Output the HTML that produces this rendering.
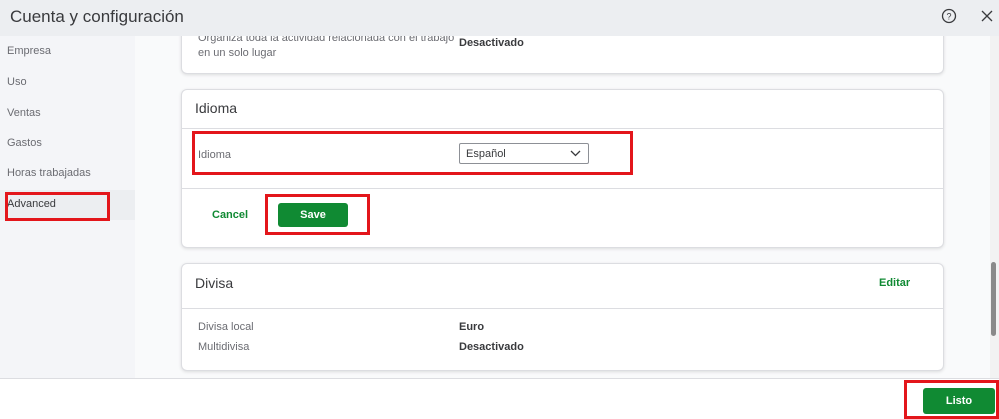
<!DOCTYPE html>
<html><head><style>
*{box-sizing:border-box;margin:0;padding:0}
body{width:999px;height:419px;overflow:hidden;font-family:"Liberation Sans",sans-serif;background:#fff;position:relative}
.a{position:absolute}
.hdr{left:0;top:0;width:999px;height:36px;background:#eceef1;z-index:5}
.side{left:0;top:36px;width:135px;height:342px;background:#f4f5f8}
.main{left:135px;top:36px;width:855px;height:342px;background:#f9fafb}
.nav{left:7px;font-size:11px;color:#6b6c72}
.card{background:#fff;border:1px solid #dcdde1;border-radius:6px;box-shadow:0 1px 3px rgba(0,0,0,.12)}
.red{border:3px solid #e3161b}
.t{font-size:11px;color:#6b6c72}
.b{font-size:11px;color:#393a3d;font-weight:bold}
.btn{background:#108a33;color:#fff;font-weight:bold;font-size:11px;border-radius:3px;text-align:center}
.z{z-index:6}
</style></head><body>
<div class="a side"></div>
<div class="a main"></div>
<div class="a hdr"></div>
<div class="a z" style="left:10px;top:7px;font-size:17px;color:#393a3d">Cuenta y configuración</div>
<svg class="a z" style="left:941px;top:8px" width="16" height="16" viewBox="0 0 16 16"><circle cx="8" cy="8" r="6.5" fill="none" stroke="#393a3d" stroke-width="1.3"/><text x="8" y="11.5" font-size="9" text-anchor="middle" fill="#393a3d" font-family="Liberation Sans">?</text></svg>
<svg class="a z" style="left:981px;top:10px" width="12" height="12" viewBox="0 0 12 12"><path d="M1 1L11 11M11 1L1 11" stroke="#393a3d" stroke-width="1.3"/></svg>
<div class="a" style="left:990px;top:36px;width:9px;height:342px;background:#f2f2f2"></div>
<div class="a" style="left:991px;top:262px;width:5px;height:74px;background:#8a8a8a;border-radius:3px"></div>
<div class="a nav" style="top:45px">Empresa</div>
<div class="a nav" style="top:76px">Uso</div>
<div class="a nav" style="top:107px">Ventas</div>
<div class="a nav" style="top:137px">Gastos</div>
<div class="a nav" style="top:167px">Horas trabajadas</div>
<div class="a" style="left:0;top:190px;width:135px;height:30px;background:#eceef1"></div>
<div class="a nav" style="top:198px;color:#393a3d">Advanced</div>
<div class="a red" style="left:5px;top:192px;width:105px;height:29px"></div>

<div class="a card" style="left:181px;top:20px;width:763px;height:54px;border-top:none;border-radius:0 0 6px 6px"></div>
<div class="a t" style="left:198px;top:31px;width:260px;line-height:15px">Organiza toda la actividad relacionada con el trabajo en un solo lugar</div>
<div class="a b" style="left:459px;top:37px">Desactivado</div>

<div class="a card" style="left:181px;top:89px;width:763px;height:159px"></div>
<div class="a" style="left:195px;top:100px;font-size:14px;color:#393a3d">Idioma</div>
<div class="a" style="left:182px;top:128px;width:761px;height:1px;background:#dcdde1"></div>
<div class="a t" style="left:198px;top:149px">Idioma</div>
<div class="a" style="left:459px;top:143px;width:130px;height:21px;border:1px solid #8d9096;border-radius:2px;font-size:11px;color:#393a3d;padding:4px 6px">Español</div>
<svg class="a" style="left:570px;top:150px" width="11" height="7" viewBox="0 0 11 7"><path d="M1 1L5.5 5.5L10 1" fill="none" stroke="#393a3d" stroke-width="1.3"/></svg>
<div class="a red" style="left:192px;top:131px;width:441px;height:44px"></div>
<div class="a" style="left:182px;top:188px;width:761px;height:1px;background:#dcdde1"></div>
<div class="a" style="left:212px;top:209px;font-size:11px;font-weight:bold;color:#108a33">Cancel</div>
<div class="a btn" style="left:278px;top:203px;width:70px;height:24px;line-height:24px">Save</div>
<div class="a red" style="left:265px;top:194px;width:105px;height:41px"></div>

<div class="a card" style="left:181px;top:263px;width:763px;height:108px"></div>
<div class="a" style="left:195px;top:275px;font-size:14px;color:#393a3d">Divisa</div>
<div class="a" style="left:879px;top:277px;font-size:11px;font-weight:bold;color:#108a33">Editar</div>
<div class="a" style="left:182px;top:308px;width:761px;height:1px;background:#dcdde1"></div>
<div class="a t" style="left:198px;top:321px">Divisa local</div>
<div class="a b" style="left:459px;top:321px">Euro</div>
<div class="a t" style="left:198px;top:341px">Multidivisa</div>
<div class="a b" style="left:459px;top:341px">Desactivado</div>

<div class="a" style="left:0;top:378px;width:999px;height:41px;background:#fff;border-top:1px solid #dcdde1"></div>
<div class="a btn" style="left:923px;top:388px;width:72px;height:26px;line-height:26px">Listo</div>
<div class="a red" style="left:904px;top:380px;width:95px;height:39px"></div>
</body></html>
